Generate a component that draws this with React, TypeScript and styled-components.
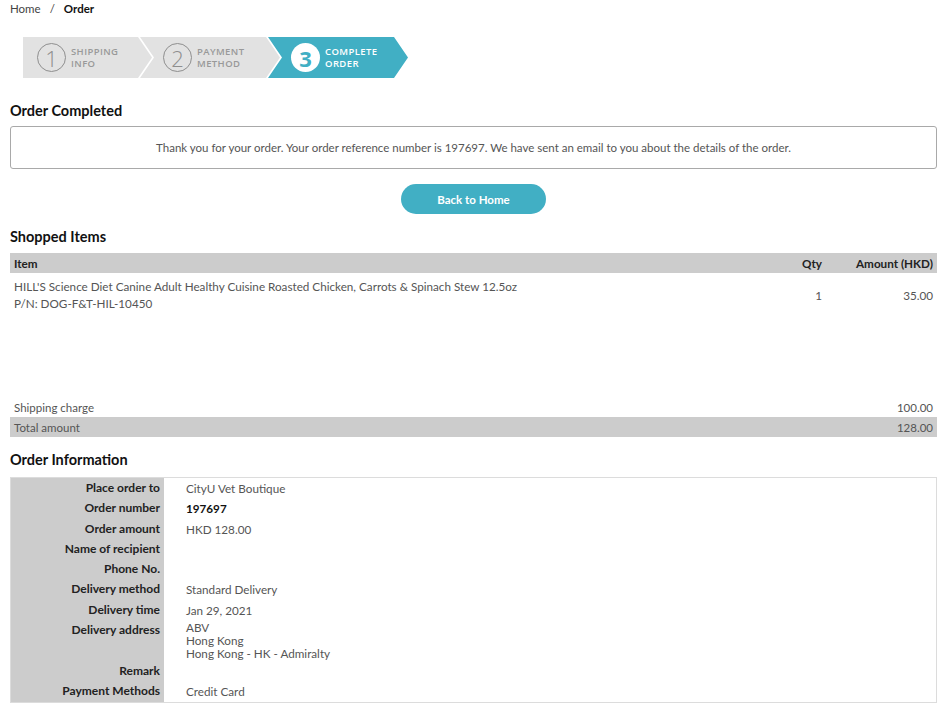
import React, { ReactElement } from "react";
import styled, { createGlobalStyle, css } from "styled-components";

const GlobalStyle = createGlobalStyle`
  body {
    margin: 0;
    background: #fff;
    font-family: Lato, "Open Sans", sans-serif;
    color: #333;
  }
`;

const TEAL = "#41afc4";

interface Step {
  num: number;
  lines: [string, string];
}

const steps: Step[] = [
  { num: 1, lines: ["SHIPPING", "INFO"] },
  { num: 2, lines: ["PAYMENT", "METHOD"] },
  { num: 3, lines: ["COMPLETE", "ORDER"] },
];

const infoRows: { label: string; value: string[]; bold?: boolean }[] = [
  { label: "Place order to", value: ["CityU Vet Boutique"] },
  { label: "Order number", value: ["197697"], bold: true },
  { label: "Order amount", value: ["HKD 128.00"] },
  { label: "Name of recipient", value: [] },
  { label: "Phone No.", value: [] },
  { label: "Delivery method", value: ["Standard Delivery"] },
  { label: "Delivery time", value: ["Jan 29, 2021"] },
  {
    label: "Delivery address",
    value: ["ABV", "Hong Kong", "Hong Kong - HK - Admiralty"],
  },
  { label: "Remark", value: [] },
  { label: "Payment Methods", value: ["Credit Card"] },
];

function App(): ReactElement {
  const current = 3;

  return (
    <Page>
      <GlobalStyle />
      <Breadcrumb>
        <span>Home</span>
        <Slash>/</Slash>
        <strong>Order</strong>
      </Breadcrumb>

      <Stepper>
        {steps.map((s, i) => (
          <StepItem key={s.num} first={i === 0} active={s.num === current}>
            <StepCircle active={s.num === current}>{s.num}</StepCircle>
            <StepLabel>
              <span>{s.lines[0]}</span>
              <span>{s.lines[1]}</span>
            </StepLabel>
          </StepItem>
        ))}
      </Stepper>

      <SectionTitle>Order Completed</SectionTitle>
      <MessageBox>
        Thank you for your order. Your order reference number is 197697. We
        have sent an email to you about the details of the order.
      </MessageBox>
      <ButtonRow>
        <HomeButton>Back to Home</HomeButton>
      </ButtonRow>

      <SectionTitle>Shopped Items</SectionTitle>
      <ItemTable>
        <thead>
          <tr>
            <HeadCell>Item</HeadCell>
            <HeadCell align="right" style={{ width: 60 }}>
              Qty
            </HeadCell>
            <HeadCell align="right" style={{ width: 103 }}>
              Amount (HKD)
            </HeadCell>
          </tr>
        </thead>
        <tbody>
          <tr>
            <ItemCell>
              HILL'S Science Diet Canine Adult Healthy Cuisine Roasted Chicken,
              Carrots &amp; Spinach Stew 12.5oz
              <br />
              P/N: DOG-F&amp;T-HIL-10450
            </ItemCell>
            <ItemCell align="right">1</ItemCell>
            <ItemCell align="right">35.00</ItemCell>
          </tr>
        </tbody>
      </ItemTable>

      <Summary>
        <SummaryRow>
          <span>Shipping charge</span>
          <span>100.00</span>
        </SummaryRow>
        <SummaryRow shaded>
          <span>Total amount</span>
          <span>128.00</span>
        </SummaryRow>
      </Summary>

      <SectionTitle>Order Information</SectionTitle>
      <InfoTable>
        <tbody>
          {infoRows.map((r) => (
            <tr key={r.label}>
              <InfoLabel>{r.label}</InfoLabel>
              <InfoValue bold={r.bold}>
                {r.value.map((v, i) => (
                  <div key={i}>{v}</div>
                ))}
              </InfoValue>
            </tr>
          ))}
        </tbody>
      </InfoTable>
    </Page>
  );
}

const Page = styled.div`
  padding: 2px 14px 8px 10px;
`;

const Breadcrumb = styled.div`
  font-size: 11.5px;
  line-height: 14px;
  color: #444;
  strong {
    color: #111;
    font-weight: 700;
  }
`;

const Slash = styled.span`
  margin: 0 9px;
`;

const Stepper = styled.div`
  display: flex;
  margin: 21px 0 24px 13px;
  height: 41px;
`;

const StepItem = styled.div<{ first: boolean; active: boolean }>`
  display: flex;
  align-items: center;
  gap: 5px;
  width: 140px;
  height: 100%;
  box-sizing: border-box;
  background: ${({ active }) => (active ? TEAL : "#e2e2e2")};
  color: ${({ active }) => (active ? "#fff" : "#999")};
  ${({ first }) =>
    first
      ? css`
          width: 129px;
          padding-left: 14px;
          clip-path: polygon(
            0 0,
            calc(100% - 14px) 0,
            100% 50%,
            calc(100% - 14px) 100%,
            0 100%
          );
        `
      : css`
          margin-left: -12px;
          padding-left: 23px;
          clip-path: polygon(
            0 0,
            calc(100% - 14px) 0,
            100% 50%,
            calc(100% - 14px) 100%,
            0 100%,
            14px 50%
          );
        `}
`;

const StepCircle = styled.div<{ active: boolean }>`
  width: 29px;
  height: 29px;
  flex-shrink: 0;
  box-sizing: border-box;
  border-radius: 50%;
  display: flex;
  align-items: center;
  justify-content: center;
  font-family: "Open Sans", sans-serif;
  font-size: 22px;
  line-height: 1;
  ${({ active }) =>
    active
      ? css`
          background: #fff;
          color: ${TEAL};
          font-weight: 700;
        `
      : css`
          border: 1.5px solid #8e8e8e;
          color: #8e8e8e;
          font-weight: 300;
        `}
`;

const StepLabel = styled.div`
  display: flex;
  flex-direction: column;
  gap: 1px;
  font-family: "Open Sans", sans-serif;
  font-size: 9.5px;
  font-weight: 600;
  line-height: 11px;
  letter-spacing: 0.4px;
`;

const SectionTitle = styled.h2`
  margin: 0;
  font-size: 14.5px;
  line-height: 18px;
  font-weight: 700;
  color: #111;
`;

const MessageBox = styled.div`
  margin-top: 6px;
  height: 43px;
  border: 1px solid #a9a9a9;
  border-radius: 3px;
  box-sizing: border-box;
  display: flex;
  align-items: center;
  justify-content: center;
  font-size: 11.5px;
  color: #555;
`;

const ButtonRow = styled.div`
  display: flex;
  justify-content: center;
  padding: 15px 0 14px;
`;

const HomeButton = styled.button`
  width: 145px;
  height: 30px;
  border: none;
  border-radius: 15px;
  background: ${TEAL};
  color: #fff;
  font-family: Lato, sans-serif;
  font-size: 11.5px;
  font-weight: 700;
  cursor: pointer;
`;

const ItemTable = styled.table`
  width: 100%;
  margin-top: 7px;
  border-collapse: collapse;
`;

const HeadCell = styled.th<{ align?: string }>`
  background: #cccccc;
  height: 20px;
  padding: 0 4px;
  font-size: 11.7px;
  font-weight: 700;
  color: #222;
  text-align: ${({ align }) => align || "left"};
`;

const ItemCell = styled.td<{ align?: string }>`
  padding: 5px 4px 0;
  font-size: 11.7px;
  line-height: 17px;
  color: #555;
  vertical-align: middle;
  text-align: ${({ align }) => align || "left"};
`;

const Summary = styled.div`
  margin: 85px 0 14px;
`;

const SummaryRow = styled.div<{ shaded?: boolean }>`
  display: flex;
  justify-content: space-between;
  align-items: center;
  height: 20px;
  padding: 0 4px;
  font-size: 11.5px;
  color: #555;
  background: ${({ shaded }) => (shaded ? "#cccccc" : "transparent")};
`;

const InfoTable = styled.table`
  width: 100%;
  margin-top: 8px;
  border-collapse: collapse;
  border: 1px solid #dcdcdc;
`;

const InfoLabel = styled.td`
  width: 145px;
  background: #cccccc;
  padding: 1px 4px;
  font-size: 12px;
  line-height: 18.3px;
  font-weight: 700;
  color: #222;
  text-align: right;
  vertical-align: top;
  white-space: nowrap;
`;

const InfoValue = styled.td<{ bold?: boolean }>`
  padding: 1px 22px;
  font-size: 11.7px;
  line-height: 13px;
  vertical-align: top;
  color: ${({ bold }) => (bold ? "#111" : "#555")};
  font-weight: ${({ bold }) => (bold ? 700 : 400)};
  div:only-child {
    line-height: 18.3px;
  }
`;

export default App;
